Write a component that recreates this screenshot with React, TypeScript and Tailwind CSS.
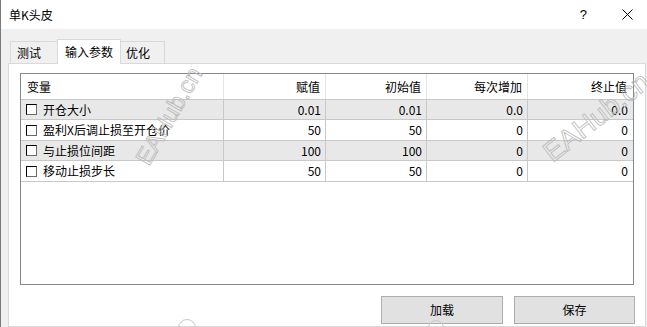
import React from "react";

const rows = [
  { name: "开仓大小", v: "0.01", init: "0.01", step: "0.0", stop: "0.0", gray: true, h: "h-[20px]" },
  { name: "盈利X后调止损至开仓价", v: "50", init: "50", step: "0", stop: "0", gray: false, h: "h-[21px]" },
  { name: "与止损位间距", v: "100", init: "100", step: "0", stop: "0", gray: true, h: "h-[20px]" },
  { name: "移动止损步长", v: "50", init: "50", step: "0", stop: "0", gray: false, h: "h-[21px]" },
];

const font = { fontFamily: '"Microsoft YaHei","Noto Sans CJK SC",sans-serif' };

function Watermark({ className }: { className: string }) {
  return (
    <div
      className={
        "pointer-events-none absolute whitespace-nowrap text-transparent [-webkit-text-stroke:0.8px_#b8b8b8] [font-family:'Liberation_Sans',Arial,sans-serif] " +
        className
      }
    >
      EAHub.cn
    </div>
  );
}

export default function App() {
  return (
    <div
      className="relative flex h-[327px] w-[647px] flex-col overflow-hidden border-l border-[#7a7a7a] bg-[#f0f0f0] text-[12px] leading-none text-black"
      style={font}
    >
      {/* title bar */}
      <div className="flex h-[29px] shrink-0 items-center bg-white pl-[8px]">
        <span className="text-[12px]">单K头皮</span>
        <span className="ml-auto mr-[35px] text-[13px] [font-family:'Liberation_Sans',sans-serif]">?</span>
        <svg width="11" height="11" viewBox="0 0 11 11" className="mr-[14px]">
          <path d="M0.5 0.5 L10.5 10.5 M10.5 0.5 L0.5 10.5" stroke="#000" strokeWidth="1" fill="none" />
        </svg>
      </div>

      {/* tabs */}
      <div className="flex h-[34px] shrink-0 items-end pl-[9px]">
        <div className="flex h-[22px] w-[47px] items-center border-l border-t border-[#d9d9d9] bg-[#f0f0f0] pl-[6px] pt-[1px]">
          测试
        </div>
        <div className="relative z-10 -mb-[1px] flex h-[25px] w-[64px] items-start border-x border-t border-[#d9d9d9] bg-white pl-[7px] pt-[6px]">
          输入参数
        </div>
        <div className="flex h-[22px] w-[44px] items-center border-r border-t border-[#d9d9d9] bg-[#f0f0f0] pl-[5px] pt-[1px]">
          优化
        </div>
      </div>

      {/* panel */}
      <div className="ml-[7px] flex w-[638px] flex-1 flex-col border border-[#d9d9d9] bg-white pl-[11px] pr-[10px] pt-[9px]">
        <div className="flex h-[212px] w-[614px] flex-col border border-[#828790] bg-white">
          {/* header */}
          <div className="flex h-[26px] shrink-0 border-b border-[#c8c8c8]">
            <div className="flex w-[203px] items-center border-r border-[#e5e5e5] pl-[6px]">变量</div>
            <div className="flex w-[102px] items-center justify-end border-r border-[#e5e5e5] pr-[5px]">赋值</div>
            <div className="flex w-[101px] items-center justify-end border-r border-[#e5e5e5] pr-[5px]">初始值</div>
            <div className="flex w-[101px] items-center justify-end border-r border-[#e5e5e5] pr-[5px]">每次增加</div>
            <div className="flex flex-1 items-center justify-end pr-[6px]">终止值</div>
          </div>
          {rows.map((r) => (
            <div
              key={r.name}
              className={`flex shrink-0 border-b border-[#c8c8c8] ${r.h} ${r.gray ? "bg-[#e8e8e8]" : "bg-white"}`}
            >
              <div className="flex w-[203px] items-center border-r border-[#c8c8c8] pl-[5px]">
                <span className="mr-[6px] inline-block h-[11px] w-[11px] border border-l-[#000] border-t-[#000] border-r-[#6a6a6a] border-b-[#6a6a6a] bg-white" />
                {r.name}
              </div>
              <div className="flex w-[102px] items-center justify-end border-r border-[#c8c8c8] pr-[4px]">{r.v}</div>
              <div className="flex w-[101px] items-center justify-end border-r border-[#c8c8c8] pr-[4px]">{r.init}</div>
              <div className="flex w-[101px] items-center justify-end border-r border-[#c8c8c8] pr-[4px]">{r.step}</div>
              <div className="flex flex-1 items-center justify-end pr-[5px]">{r.stop}</div>
            </div>
          ))}
        </div>

        {/* buttons */}
        <div className="mt-[11px] flex justify-end gap-[11px]">
          <button className="flex h-[28px] w-[122px] items-center justify-center border border-[#adadad] bg-[#e1e1e1] text-[12px]">
            加载
          </button>
          <button className="flex h-[28px] w-[121px] items-center justify-center border border-[#adadad] bg-[#e1e1e1] text-[12px]">
            保存
          </button>
        </div>
      </div>

      {/* watermarks */}
      <Watermark className="left-[114px] top-[104px] origin-center -rotate-[60deg] text-[24px]" />
      <Watermark className="left-[546px] top-[142px] origin-left -rotate-[38deg] text-[28px]" />
      <div className="pointer-events-none absolute left-[177px] top-[319px] h-[18px] w-[18px] rounded-full border border-[#c8c8c8]" />
      <div className="pointer-events-none absolute left-[427px] top-[320px] h-[16px] w-[16px] rounded-full border border-[#c8c8c8]" />
    </div>
  );
}
